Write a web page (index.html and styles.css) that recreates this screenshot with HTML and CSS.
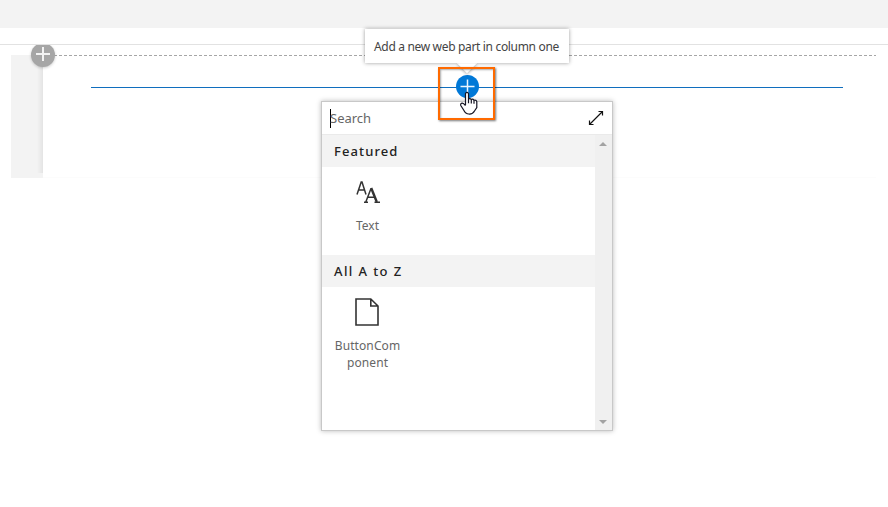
FILE: index.html
```html
<!DOCTYPE html>
<html lang="en">
<head>
<meta charset="utf-8">
<title>Page editor</title>
<link rel="stylesheet" href="styles.css">
</head>
<body>
<header class="topbar"></header>
<div class="commandbar"></div>
<main class="canvas">
  <section class="zone">
    <div class="zone-toolbar"></div>
    <div class="zone-body"><div class="insert-line"></div></div>
    <button class="add-section" aria-label="Add section"><svg viewBox="0 0 24 24"><path d="M12 4v14M5 11h14"/></svg></button>
  </section>
  <button class="add-part" aria-label="Add web part"><svg viewBox="0 0 24 24"><path d="M11.5 4.5v14M4.5 11.5h14"/></svg></button>
  <div class="tooltip"><span class="tip-text">Add a new web part in column one</span></div>
  <div class="toolbox">
    <div class="search"><span class="caret"></span><span class="placeholder">Search</span>
      <svg class="expand" viewBox="0 0 16 16"><path d="M1.5 14.5l13-13M10.5 1.5h4v4M1.5 10.5v4h4"/></svg>
    </div>
    <div class="panel">
      <div class="groups">
        <h2>Featured</h2>
        <div class="item text-item">
          <svg class="icon" viewBox="0 0 24 24"><path class="thin" d="M1 14.5L5.2 2h.8L10 14.5M2.7 10h6"/><path class="thin" d="M8 22.3h4M18.5 22.3H24M9.7 22.2L15 8.5M11.6 17.3h7"/><path class="thick" d="M15.2 8l5.6 14"/></svg>
          <span class="text-label">Text</span>
        </div>
        <h2 class="all">All A to Z</h2>
        <div class="item component-item">
          <svg class="icon page-icon" viewBox="0 0 24 28"><path d="M1 1h14.8L23 8v19H1zM15.8 1v7H23"/></svg>
          <span class="component-label">ButtonCom<br>ponent</span>
        </div>
      </div>
      <div class="scrollbar"><svg viewBox="0 0 8 4"><path d="M0 4l4-4 4 4z"/></svg><svg viewBox="0 0 8 4"><path d="M0 0h8L4 4z"/></svg></div>
    </div>
  </div>
  <div class="highlight"></div>
  <svg class="cursor" viewBox="0 0 18 24"><path d="M5.5 14V2.5Q7 .2 8.5 2.5V8q1.6-1 2.7.5 1.7-.8 2.8.8 2.3-.5 2.8 1.4v5.8L14.5 20q-1.8 3.3-5.7 3-3.3-.2-5-3.8L.8 14.5q-.6-2.3 1.5-2.3 1.3 0 3.2 2.5M8.5 7.7v4.5M11.3 8.5v4M14 9.3v3.5"/></svg>
</main>
</body>
</html>
```

FILE: styles.css
```css
* { box-sizing: border-box; }
body { margin: 0; height: 507px; overflow: hidden; background: #fff; font-family: "Noto Sans", sans-serif; color: #333; position: relative; }
svg { display: block; fill: none; }
button { border: 0; padding: 0; border-radius: 50%; }
.topbar { height: 28px; background: #f3f3f3; }
.commandbar { height: 17px; border-bottom: 1px solid #e2e2e2; }
.canvas { height: 462px; padding: 10px 12px 0 11px; overflow: hidden; }
.zone { display: flex; height: 123px; position: relative; }
.zone-toolbar { width: 32px; background: linear-gradient(90deg, transparent 26px, #e4e4e4) 0 0 / 32px 118px no-repeat, #f3f3f3; }
.zone-body { flex: 1; padding: 32px 33px 0 48px; border-bottom: 1px solid #fcfcfc; background: repeating-linear-gradient(90deg, #a6a6a6 0 3px, transparent 3px 5px) 1px 0 / 100% 1px no-repeat; }
.insert-line { height: 1px; background: #106ebe; }
.add-section { position: absolute; left: 20px; top: -12px; width: 24px; height: 24px; background: #a6a6a6; box-shadow: 0 1px 3px #0003; }
.add-section svg { stroke: #f3f3f3; stroke-width: 2; }
.add-part { position: absolute; left: 456px; top: 75px; width: 23px; height: 23px; background: #0078d7; }
.add-part svg { width: 24px; height: 24px; stroke: #eaf6ff; stroke-width: 1.5; }
.tooltip { position: absolute; left: 365px; top: 29px; width: 204px; height: 34px; padding-left: 9px; display: flex; align-items: center; background: #fff; box-shadow: 0 0 4px #0006; font-size: 12px; color: #444; }
.tooltip::before { content: ""; position: absolute; width: 16px; height: 16px; left: 94px; top: 25px; transform: rotate(45deg); background: #fff; box-shadow: 2px 2px 3px -1px #0004; clip-path: polygon(120% -10%, 120% 120%, -10% 120%); }
.tip-text { white-space: nowrap; letter-spacing: -.33px; }
.toolbox { position: absolute; left: 321px; top: 101px; width: 292px; height: 330px; border: 1px solid #c8c8c8; background: #fff; box-shadow: 0 0 5px #0004; }
.search { height: 33px; display: flex; align-items: center; padding: 0 8px; border-bottom: 1px solid #eaeaea; font-size: 13px; color: #666; }
.caret { width: 1px; height: 19px; background: #000; }
.placeholder { margin-left: -1px; }
.expand { width: 16px; height: 16px; margin-left: auto; stroke: #111; stroke-width: 1.2; }
.panel { display: flex; height: 295px; }
.groups { flex: 1; }
h2 { height: 32px; margin: 0; padding-left: 12px; line-height: 32px; font-size: 13px; font-weight: 500; letter-spacing: 1.1px; background: #f3f3f3; color: #222; }
.all { letter-spacing: 1.4px; }
.item { width: 90px; display: flex; flex-direction: column; align-items: center; font-size: 12px; line-height: 17px; text-align: center; color: #666; }
.text-item { height: 88px; padding-top: 13px; }
.component-item { padding-top: 11px; }
.icon { width: 24px; height: 24px; stroke: #333; }
.text-item .icon { margin-left: 1px; }
.thin { stroke-width: 1.5; }
.thick { stroke-width: 2.4; }
.page-icon { height: 28px; stroke-width: 1.6; }
.text-label { margin: 13px 0 0 1px; }
.component-label { margin: 11px 0 0 1px; letter-spacing: .1px; }
.scrollbar { width: 17px; padding: 7px 5px 6px 4px; display: flex; flex-direction: column; justify-content: space-between; background: #f0f0f0; }
.scrollbar svg { width: 8px; height: 4px; fill: #a3a3a3; }
.highlight { position: absolute; left: 438px; top: 67px; width: 57px; height: 53px; border: 2px solid #ff6a00; box-shadow: 1px 1px 2px #0008, inset 1px 1px 2px #0005; }
.cursor { position: absolute; left: 460px; top: 91px; width: 18px; height: 24px; }
.cursor path { fill: #fff; stroke: #151523; stroke-width: 1.2; }
```
